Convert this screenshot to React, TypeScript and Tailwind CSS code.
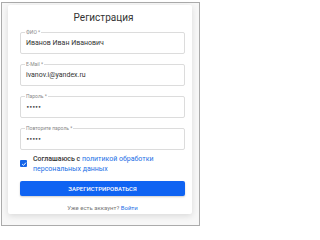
import { useState } from "react";

const fields = [
  { label: "ФИО *", value: "Иванов Иван Иванович", type: "text" },
  { label: "E-Mail *", value: "ivanov.i@yandex.ru", type: "text" },
  { label: "Пароль *", value: "•••••", type: "password" },
  { label: "Повторите пароль *", value: "•••••", type: "password" },
];

function Field({ label, value, type }: { label: string; value: string; type: string }) {
  return (
    <div className="relative h-[22px] border border-[#dcdcdc] rounded-[2px] flex items-center pl-[5px]">
      <span className="absolute -top-[4px] left-[4px] bg-white px-[1px] text-[5px] leading-[7px] text-[#8a8a8a]">
        {label}
      </span>
      <span
        className={
          type === "password"
            ? "text-[6px] leading-[8px] text-[#444] tracking-[-0.6px] font-['DejaVu_Sans',sans-serif]"
            : "text-[7px] leading-none text-[#333]"
        }
      >
        {value}
      </span>
    </div>
  );
}

export default function App() {
  const [agree] = useState(true);

  return (
    <div className="w-[202px] h-[228px] bg-white pt-[2px] pl-[1px] font-['Roboto',sans-serif]">
      <div className="w-[199px] h-[224px] border border-[#ababab] bg-[#f7f7f7] pt-[2px] pl-[6px]">
        <div className="w-[184px] h-[209px] bg-white rounded-[2px] shadow-[0_2px_6px_rgba(0,0,0,0.12)] pl-[12px] pr-[7px]">
          <h1 className="pt-[4px] h-[22px] leading-[18px] text-center text-[10px] text-[#333] pl-[2px]">
            Регистрация
          </h1>

          <div className="mt-[5px] flex flex-col gap-[10px]">
            {fields.map((f) => (
              <Field key={f.label} {...f} />
            ))}
          </div>

          <div className="mt-[4px] flex items-start gap-[5px]">
            <span className="mt-[6px] w-[7px] h-[7px] shrink-0 rounded-[1px] bg-[#1565e8] flex items-center justify-center">
              {agree && (
                <svg viewBox="0 0 10 10" className="w-[6px] h-[6px]">
                  <path d="M2 5.2 L4.2 7.3 L8.2 2.8" fill="none" stroke="white" strokeWidth="1.6" />
                </svg>
              )}
            </span>
            <div className="text-[7px] leading-[10px] text-[#333] ml-[1px]">
              <div>
                <span className="font-medium">Соглашаюсь с</span>{" "}
                <a className="text-[#1a6fe6]">политикой обработки</a>
              </div>
              <a className="block text-[#1a6fe6]">персональных данных</a>
            </div>
          </div>

          <button className="mt-[4px] w-full h-[15px] rounded-[2px] bg-[#0f63f2] text-white text-[6px] font-medium uppercase shadow-[0_1px_2px_rgba(0,0,0,0.2)]">
            Зарегистрироваться
          </button>

          <p className="mt-[5px] text-center text-[6px] leading-[10px] text-[#777]">
            Уже есть аккаунт? <a className="text-[#1a6fe6]">Войти</a>
          </p>
        </div>
      </div>
    </div>
  );
}
